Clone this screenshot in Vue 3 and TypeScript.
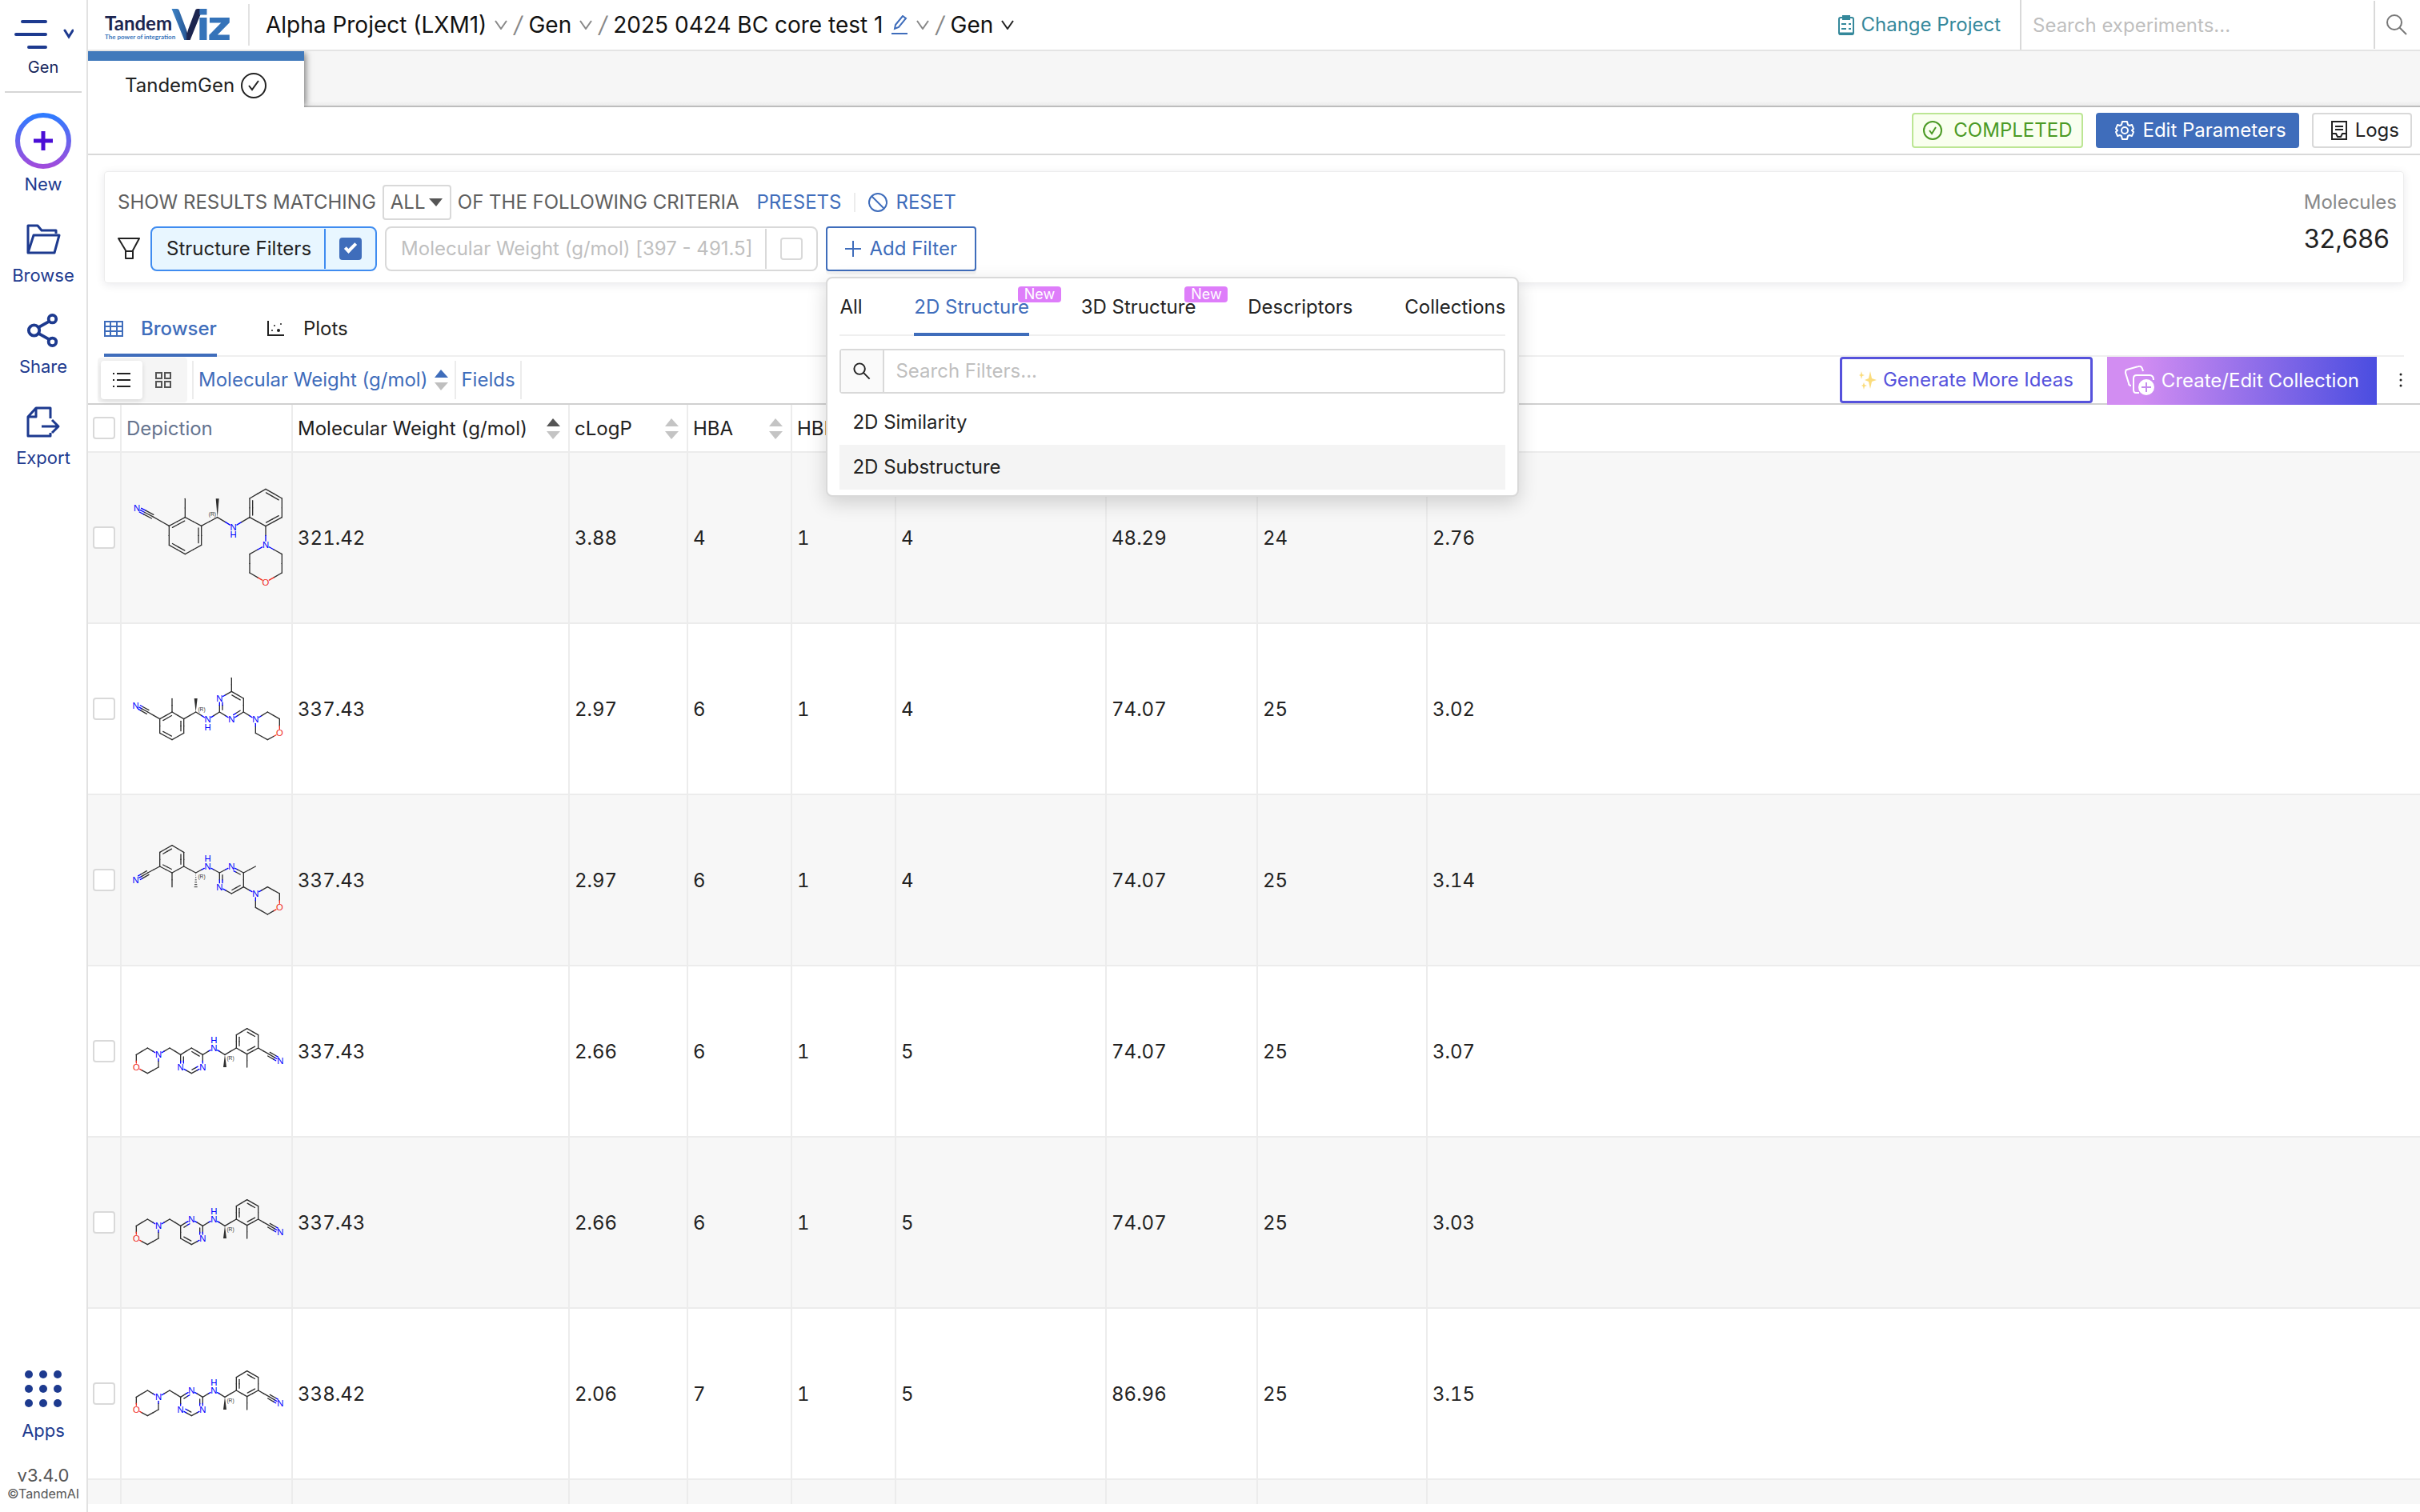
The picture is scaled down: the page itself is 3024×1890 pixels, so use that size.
<script setup lang="ts">
import { ref } from 'vue'

type Atom = [x: number, y: number, label?: string]
type Bond = [a: number, b: number, kind?: 1 | 2 | 3 | 'wedge' | 'hash']

interface Molecule {
  viewBox: string
  atoms: Atom[]
  bonds: Bond[]
  rings: number[][]
  hydrogen: [number, number]
  stereo: [number, number]
}

interface Segment {
  x1: number
  y1: number
  x2: number
  y2: number
  color: string
}

const colors: Record<string, string> = { N: '#0000ff', O: '#f02a1d' }
const carbon = '#2f2f2f'

const linkerBonds: Bond[] = [
  [0, 1, 3], [1, 2], [2, 3, 2], [3, 4], [4, 5, 2], [5, 6], [6, 7, 2], [7, 2], [3, 8], [4, 9],
]

const anilineMorpholine: Molecule = {
  viewBox: '156 18 636 636',
  atoms: [
    [213, 226, 'N'], [272, 257], [334, 292], [394, 260], [455, 292], [455, 364], [394, 398], [334, 364],
    [394, 190], [515, 260], [515, 190], [575, 296, 'N'],
    [636, 260], [636, 189], [696, 154], [757, 189], [757, 260], [696, 293],
    [696, 364, 'N'], [757, 398], [757, 468], [696, 503, 'O'], [636, 468], [636, 398],
  ],
  bonds: [
    ...linkerBonds, [9, 10, 'wedge'], [9, 11], [11, 12],
    [12, 13, 2], [13, 14], [14, 15, 2], [15, 16], [16, 17, 2], [17, 12],
    [17, 18], [18, 19], [19, 20], [20, 21], [21, 22], [22, 23], [23, 18],
  ],
  rings: [[2, 3, 4, 5, 6, 7], [12, 13, 14, 15, 16, 17]],
  hydrogen: [575, 323],
  stereo: [496, 248],
}

const methylPyrimidineA: Molecule = {
  viewBox: '156 -60 636 636',
  atoms: [
    [209, 245, 'N'], [254, 270], [299, 296], [345, 270], [389, 296], [389, 349], [345, 374], [299, 349],
    [345, 220], [434, 270], [434, 219], [479, 298, 'N'],
    [523, 270], [523, 219, 'N'], [568, 193], [613, 219], [613, 270], [568, 298, 'N'],
    [658, 298, 'N'], [703, 270], [748, 296], [748, 349, 'O'], [703, 374], [658, 349], [568, 142],
  ],
  bonds: [
    ...linkerBonds, [9, 10, 'wedge'], [9, 11], [11, 12],
    [12, 13, 2], [13, 14], [14, 15, 2], [15, 16], [16, 17, 2], [17, 12], [14, 24],
    [16, 18], [18, 19], [19, 20], [20, 21], [21, 22], [22, 23], [23, 18],
  ],
  rings: [[2, 3, 4, 5, 6, 7], [12, 13, 14, 15, 16, 17]],
  hydrogen: [479, 327],
  stereo: [456, 259],
}

const methylPyrimidineB: Molecule = {
  viewBox: '156 582 636 636',
  atoms: [
    [209, 899, 'N'], [254, 873], [299, 849], [345, 873], [389, 849], [389, 796], [345, 770], [299, 796],
    [345, 926], [434, 873], [434, 926], [479, 849, 'N'],
    [523, 873], [568, 849, 'N'], [613, 873], [613, 926], [568, 951], [523, 926, 'N'],
    [658, 951, 'N'], [703, 926], [748, 951], [748, 1003, 'O'], [703, 1029], [658, 1003], [658, 849],
  ],
  bonds: [
    ...linkerBonds, [9, 10, 'hash'], [9, 11], [11, 12],
    [12, 17, 2], [12, 13], [13, 14, 2], [14, 15], [15, 16, 2], [16, 17], [14, 24],
    [15, 18], [18, 19], [19, 20], [20, 21], [21, 22], [22, 23], [23, 18],
  ],
  rings: [[2, 3, 4, 5, 6, 7], [12, 13, 14, 15, 16, 17]],
  hydrogen: [479, 820],
  stereo: [456, 888],
}

function morpholinomethyl(nitrogens: number[], doubles: Bond[]): Molecule {
  const core: Atom[] = [[677, 199], [718, 174], [760, 199], [760, 246], [718, 269], [677, 246]]
  return {
    viewBox: '456 -132 636 636',
    atoms: [
      [1051, 222, 'N'], [1008, 197], [968, 174], [926, 197], [886, 174], [886, 125], [926, 101], [968, 125],
      [926, 246], [843, 199], [843, 246], [802, 174, 'N'],
      ...core.map(([x, y], i): Atom => (nitrogens.includes(i) ? [x, y, 'N'] : [x, y])),
      [636, 174], [594, 199, 'N'], [553, 174], [511, 199], [511, 246, 'O'], [553, 269], [594, 246],
    ],
    bonds: [
      ...linkerBonds, [9, 10, 'wedge'], [9, 11], [11, 14], ...doubles,
      [12, 18], [18, 19], [19, 20], [20, 21], [21, 22], [22, 23], [23, 24], [24, 19],
    ],
    rings: [[2, 3, 4, 5, 6, 7], [12, 13, 14, 15, 16, 17]],
    hydrogen: [802, 145],
    stereo: [864, 212],
  }
}

const pyrimidineC = morpholinomethyl([3, 5], [[12, 17, 2], [12, 13], [13, 14, 2], [14, 15], [15, 16, 2], [16, 17]])
const pyrimidineD = morpholinomethyl([1, 3], [[12, 13, 2], [13, 14], [14, 15, 2], [15, 16], [16, 17, 2], [17, 12]])
const triazine = morpholinomethyl([1, 3, 5], [[12, 13, 2], [13, 14], [14, 15, 2], [15, 16], [16, 17, 2], [17, 12]])

function segments(mol: Molecule): Segment[] {
  const out: Segment[] = []
  for (const [a, b, kind = 1] of mol.bonds) {
    if (kind === 'wedge' || kind === 'hash') continue
    const [ax, ay, al] = mol.atoms[a]
    const [bx, by, bl] = mol.atoms[b]
    const len = Math.hypot(bx - ax, by - ay)
    const ux = (bx - ax) / len
    const uy = (by - ay) / len
    let offsets = [0]
    let side = 1
    if (kind === 3) offsets = [-8, 0, 8]
    if (kind === 2) {
      offsets = [0, 11]
      const ring = mol.rings.find((r) => r.includes(a) && r.includes(b))
      if (ring) {
        const cx = ring.reduce((s, i) => s + mol.atoms[i][0], 0) / 6
        const cy = ring.reduce((s, i) => s + mol.atoms[i][1], 0) / 6
        side = (cx - ax) * -uy + (cy - ay) * ux > 0 ? 1 : -1
      }
    }
    for (const o of offsets) {
      const inset = o !== 0 && kind === 2 ? 8 : 0
      const sa = al ? 15 : inset
      const sb = bl ? 15 : o !== 0 && kind === 3 ? 0 : inset
      const dx = -uy * o * side
      const dy = ux * o * side
      const x1 = ax + ux * sa + dx
      const y1 = ay + uy * sa + dy
      const x2 = bx - ux * sb + dx
      const y2 = by - uy * sb + dy
      const mx = (ax + bx) / 2 + dx
      const my = (ay + by) / 2 + dy
      out.push({ x1, y1, x2: mx, y2: my, color: al ? colors[al] : carbon })
      out.push({ x1: mx, y1: my, x2, y2, color: bl ? colors[bl] : carbon })
    }
  }
  return out
}

function wedge(mol: Molecule): string {
  const bond = mol.bonds.find((b) => b[2] === 'wedge')
  if (!bond) return ''
  const [x, y] = mol.atoms[bond[0]]
  const [x2, y2] = mol.atoms[bond[1]]
  return `${x},${y} ${x2 - 6},${y2} ${x2 + 6},${y2}`
}

function hashes(mol: Molecule): Segment[] {
  const bond = mol.bonds.find((b) => b[2] === 'hash')
  if (!bond) return []
  const [x, y] = mol.atoms[bond[0]]
  const y2 = mol.atoms[bond[1]][1]
  return [1, 2, 3, 4, 5, 6].map((i) => {
    const yy = y + ((y2 - y) * i) / 6
    return { x1: x - i, y1: yy, x2: x + i, y2: yy, color: carbon }
  })
}

const columns = [
  { key: 'mw', title: 'Molecular Weight (g/mol)', active: true },
  { key: 'clogp', title: 'cLogP' },
  { key: 'hba', title: 'HBA' },
  { key: 'hbd', title: 'HBD' },
  { key: 'rot', title: '' },
  { key: 'tpsa', title: '' },
  { key: 'heavy', title: '' },
]

const rows = [
  { mol: anilineMorpholine, values: ['321.42', '3.88', '4', '1', '4', '48.29', '24', '2.76'] },
  { mol: methylPyrimidineA, values: ['337.43', '2.97', '6', '1', '4', '74.07', '25', '3.02'] },
  { mol: methylPyrimidineB, values: ['337.43', '2.97', '6', '1', '4', '74.07', '25', '3.14'] },
  { mol: pyrimidineC, values: ['337.43', '2.66', '6', '1', '5', '74.07', '25', '3.07'] },
  { mol: pyrimidineD, values: ['337.43', '2.66', '6', '1', '5', '74.07', '25', '3.03'] },
  { mol: triazine, values: ['338.42', '2.06', '7', '1', '5', '86.96', '25', '3.15'] },
]

const filterTabs = [
  { label: 'All' },
  { label: '2D Structure', isNew: true },
  { label: '3D Structure', isNew: true },
  { label: 'Descriptors' },
  { label: 'Collections' },
]
const activeFilterTab = ref('2D Structure')
const filterItems = ['2D Similarity', '2D Substructure']
const structureOn = ref(true)
const weightOn = ref(false)
</script>

<template>
  <div class="app">
    <aside class="side">
      <button class="side-btn menu" type="button">
        <svg width="76" height="40" viewBox="0 0 76 40" fill="none" stroke="#1d3a8f" stroke-linecap="round">
          <path d="M12 3h29M4 19h37M20 35h21" stroke-width="4" />
          <path d="M65 14l5 8 5-8" stroke-width="3" />
        </svg>
        <span class="menu-label">Gen</span>
      </button>
      <button class="side-btn new" type="button">
        <svg width="72" height="72" viewBox="0 0 72 72" fill="none">
          <defs>
            <linearGradient id="ring" x1="0" y1="0" x2="0" y2="1">
              <stop offset="0" stop-color="#2f7bff" />
              <stop offset="1" stop-color="#a04bdc" />
            </linearGradient>
          </defs>
          <circle cx="36" cy="36" r="32" stroke="url(#ring)" stroke-width="6" />
          <path d="M36 24v24M24 36h24" stroke="#4a0ed6" stroke-width="5" />
        </svg>
        <span>New</span>
      </button>
      <button class="side-btn" type="button">
        <svg width="44" height="42" viewBox="0 0 44 42" fill="none" stroke="#1d3a8f" stroke-width="3" stroke-linejoin="round">
          <path d="M3 38V4h12l5 6h18v4M3 38l7-22h32l-6 22z" />
        </svg>
        <span>Browse</span>
      </button>
      <button class="side-btn" type="button">
        <svg width="42" height="42" viewBox="0 0 44 44" fill="none" stroke="#1d3a8f" stroke-width="4">
          <circle cx="10" cy="22" r="7" />
          <circle cx="34" cy="7" r="5" />
          <circle cx="34" cy="37" r="5" />
          <path d="M16 18l14-8M16 26l14 8" />
        </svg>
        <span>Share</span>
      </button>
      <button class="side-btn" type="button">
        <svg width="44" height="42" viewBox="0 0 44 42" fill="none" stroke="#1d3a8f" stroke-width="3" stroke-linejoin="round">
          <path d="M31 17V4H13L3 15v24h28v-4M13 4v11H3M20 27h20M33 19l8 8-8 8" />
        </svg>
        <span>Export</span>
      </button>
      <div class="side-foot">
        <button class="side-btn" type="button">
          <svg width="48" height="48" viewBox="0 0 48 48" fill="#1d3a8f">
            <template v-for="r in 3" :key="r">
              <circle v-for="c in 3" :key="c" :cx="c * 18 - 12" :cy="r * 18 - 12" r="5" />
            </template>
          </svg>
          <span>Apps</span>
        </button>
        <span class="version">v3.4.0</span>
        <span class="copy">©TandemAI</span>
      </div>
    </aside>

    <main class="main">
      <header class="top">
        <svg class="logo" width="162" height="56" viewBox="0 0 162 56">
          <defs>
            <linearGradient id="vee" x1="0" y1="0" x2="1" y2="0">
              <stop offset="0" stop-color="#3f86c8" />
              <stop offset="0.45" stop-color="#285a9a" />
              <stop offset="0.5" stop-color="#1c2550" />
              <stop offset="1" stop-color="#1c2550" />
            </linearGradient>
          </defs>
          <text x="1" y="35" class="logo-name">Tandem</text>
          <text x="1" y="46" class="logo-tag">The power of integration</text>
          <text x="85" y="47" class="logo-big" fill="url(#vee)">V</text>
          <text x="115" y="47" class="logo-iz">i</text>
          <text x="129" y="47" class="logo-iz">z</text>
        </svg>
        <nav class="crumbs">
          <a href="#">Alpha Project (LXM1)</a>
          <svg class="chev" viewBox="0 0 16 12"><path d="M1 1l7 10 7-10" /></svg>
          <i>/</i>
          <a href="#">Gen</a>
          <svg class="chev" viewBox="0 0 16 12"><path d="M1 1l7 10 7-10" /></svg>
          <i>/</i>
          <a href="#">2025 0424 BC core test 1</a>
          <svg class="pen" viewBox="0 0 22 24"><path d="M1 23h20M5 17l1-5L15 1l4 3L10 15z" /></svg>
          <svg class="chev" viewBox="0 0 16 12"><path d="M1 1l7 10 7-10" /></svg>
          <i>/</i>
          <a href="#">Gen</a>
          <svg class="chev dark" viewBox="0 0 16 12"><path d="M1 1l7 10 7-10" /></svg>
        </nav>
        <a class="change" href="#">
          <svg width="20" height="28" viewBox="0 0 20 28" fill="none" stroke="#35889b" stroke-width="2">
            <rect x="1" y="5" width="18" height="21" rx="2" />
            <path d="M1 25h18" stroke-width="3" />
            <path d="M6 3h8v4H6z" fill="#35889b" />
            <path d="M4 13h6M4 19h6M13 13h3M13 19h3" />
          </svg>
          Change Project
        </a>
        <input class="top-search" type="text" placeholder="Search experiments..." aria-label="Search experiments" />
        <button class="top-search-btn" type="button" aria-label="Search">
          <svg width="26" height="26" viewBox="0 0 26 26" fill="none" stroke="#777" stroke-width="2">
            <circle cx="10" cy="10" r="9" />
            <path d="M16 16l9 9" />
          </svg>
        </button>
      </header>

      <div class="tabs">
        <button class="tab" type="button">
          TandemGen
          <svg width="32" height="32" viewBox="0 0 32 32" fill="none" stroke="#222" stroke-width="2">
            <circle cx="16" cy="16" r="15" />
            <path d="M10 16l4 5 8-11" />
          </svg>
        </button>
      </div>

      <div class="actions">
        <span class="tag">
          <svg width="24" height="24" viewBox="0 0 24 24" fill="none" stroke="#4b9a25" stroke-width="2">
            <circle cx="12" cy="12" r="11" />
            <path d="M8 12l3 4 5-8" />
          </svg>
          COMPLETED
        </span>
        <button class="btn primary" type="button">
          <svg width="24" height="24" viewBox="0 0 24 24" fill="none" stroke="#fff" stroke-width="2" stroke-linejoin="round">
            <path d="M9 1h6l1 4 2 1 3-1 2 5-2 2 2 2-2 5-3-1-2 1-1 4H9l-1-4-2-1-3 1-2-5 2-2-2-2 2-5 3 1 2-1z" />
            <circle cx="12" cy="12" r="4" />
          </svg>
          Edit Parameters
        </button>
        <button class="btn" type="button">
          <svg width="20" height="24" viewBox="0 0 20 24" fill="none" stroke="#222" stroke-width="2">
            <path d="M1 1h18v22H1zM5 7h10M5 11h10M1 16h5l2 4h4l2-4h5" />
          </svg>
          Logs
        </button>
      </div>

      <div class="content">
        <section class="card">
          <div class="criteria">
            <div class="line">
              <label for="match">SHOW RESULTS MATCHING</label>
              <span class="match">
                <select id="match"><option>ALL</option><option>ANY</option></select>
                <svg width="17" height="10" viewBox="0 0 17 10"><path d="M0 0h17L9 10z" fill="#555" /></svg>
              </span>
              <span>OF THE FOLLOWING CRITERIA</span>
              <button class="text-btn presets" type="button">PRESETS</button>
              <span class="rule"></span>
              <button class="text-btn" type="button">
                <svg width="24" height="24" viewBox="0 0 24 24" fill="none" stroke="#3f6dbb" stroke-width="2">
                  <circle cx="12" cy="12" r="11" />
                  <path d="M4 4l16 16" />
                </svg>
                RESET
              </button>
            </div>
            <div class="line filters">
              <svg class="funnel" width="28" height="28" viewBox="0 0 28 28" fill="none" stroke="#222" stroke-width="2" stroke-linejoin="round">
                <path d="M1 1h26l-8 15v10h-9V16zM10 17h9" />
              </svg>
              <div class="chip on">
                <label for="f-structure">Structure Filters</label>
                <span class="chip-box"><input id="f-structure" v-model="structureOn" class="check" type="checkbox" /></span>
              </div>
              <div class="chip">
                <label for="f-weight">Molecular Weight (g/mol) [397 - 491.5]</label>
                <span class="chip-box"><input id="f-weight" v-model="weightOn" class="check" type="checkbox" /></span>
              </div>
              <div class="adder">
                <button class="add" type="button">
                  <svg width="20" height="20" viewBox="0 0 20 20" stroke="#3f6dbb" stroke-width="2"><path d="M10 0v20M0 10h20" /></svg>
                  Add Filter
                </button>
                <div class="popup">
                  <div class="popup-tabs">
                    <button
                      v-for="t in filterTabs"
                      :key="t.label"
                      type="button"
                      :class="{ active: t.label === activeFilterTab }"
                      @click="activeFilterTab = t.label"
                    >
                      {{ t.label }}<sup v-if="t.isNew">New</sup>
                    </button>
                  </div>
                  <div class="popup-search">
                    <svg width="54" height="52" viewBox="0 0 54 52" fill="none" stroke="#222" stroke-width="2">
                      <circle cx="24" cy="23" r="7" />
                      <path d="M29 28l8 8" />
                    </svg>
                    <input type="text" placeholder="Search Filters..." aria-label="Search Filters" />
                  </div>
                  <ul>
                    <li v-for="(item, i) in filterItems" :key="item" :class="{ hover: i === 1 }">{{ item }}</li>
                  </ul>
                </div>
              </div>
            </div>
          </div>
          <dl class="count">
            <dt>Molecules</dt>
            <dd>32,686</dd>
          </dl>
        </section>

        <nav class="views">
          <button class="view active" type="button">
            <svg width="24" height="20" viewBox="0 0 24 20" fill="none" stroke="#3f6dbb" stroke-width="2">
              <path d="M1 1h22v18H1zM1 7h22M1 13h22M8 1v18M16 1v18" />
            </svg>
            Browser
          </button>
          <button class="view" type="button">
            <svg width="24" height="20" viewBox="0 0 24 20" fill="#222">
              <path d="M1 0h2v17h19v2H1z" />
              <circle cx="7" cy="12" r="1" /><circle cx="10" cy="6" r="1" />
              <circle cx="15" cy="12" r="2" /><circle cx="18" cy="4" r="1" />
            </svg>
            Plots
          </button>
        </nav>
      </div>

      <div class="toolbar">
        <div class="seg">
          <button class="on" type="button" aria-label="List">
            <svg width="24" height="20" viewBox="0 0 24 20" stroke="#222" stroke-width="2">
              <path d="M6 2h17M6 10h17M6 18h17M1 2h2M1 10h2M1 18h2" />
            </svg>
          </button>
          <button type="button" aria-label="Grid">
            <svg width="20" height="20" viewBox="0 0 20 20" fill="none" stroke="#555" stroke-width="2">
              <path d="M1 1h7v7H1zM12 1h7v7h-7zM1 12h7v7H1zM12 12h7v7h-7z" />
            </svg>
          </button>
        </div>
        <button class="tool sort" type="button">
          Molecular Weight (g/mol)
          <svg width="17" height="26" viewBox="0 0 17 26"><path d="M8 0l9 10H0z" fill="#3f6dbb" /><path d="M8 26l9-10H0z" fill="#bfbfbf" /></svg>
        </button>
        <button class="tool" type="button">Fields</button>
        <button class="ideas" type="button">
          <svg width="22" height="24" viewBox="0 0 22 24" fill="#fbdc7c">
            <path d="M14 1l2 9 6 2-6 2-2 9-2-9-5-2 5-2zM3 1l1 4 3 1-3 1-1 4-1-4-2-1 2-1zM6 15l1 3 3 1-3 1-1 4-1-4-2-1 2-1z" />
          </svg>
          Generate More Ideas
        </button>
        <button class="create" type="button">
          <svg width="38" height="38" viewBox="0 0 38 38" fill="none" stroke="#fff" stroke-width="2">
            <path d="M8 25c-2 0-3-1-3-3L1 9c0-2 0-4 2-4l14-4c3-1 5 1 6 6" />
            <path d="M18 34h-4c-2 0-3-1-3-4V16c0-3 1-4 4-4h16c3 0 5 1 5 6" />
            <circle cx="27" cy="27" r="9" fill="#fff" />
            <path d="M27 21v12M21 27h12" stroke="#c58bee" />
          </svg>
          Create/Edit Collection
        </button>
        <button class="more" type="button" aria-label="More">
          <svg width="4" height="18" viewBox="0 0 4 18" fill="#222"><circle cx="2" cy="2" r="1.5" /><circle cx="2" cy="9" r="1.5" /><circle cx="2" cy="16" r="1.5" /></svg>
        </button>
      </div>

      <table class="grid">
        <colgroup>
          <col class="c-check" /><col class="c-mol" /><col class="c-mw" /><col class="c-logp" />
          <col class="c-hb" /><col class="c-hb" /><col class="c-rot" /><col class="c-tpsa" /><col class="c-heavy" /><col />
        </colgroup>
        <thead>
          <tr>
            <th class="pick"><input class="check" type="checkbox" aria-label="Select all" /></th>
            <th class="muted">Depiction</th>
            <th v-for="c in columns" :key="c.key">
              <div class="head">
                <span>{{ c.title }}</span>
                <svg width="17" height="26" viewBox="0 0 17 26">
                  <path d="M8 0l9 10H0z" :fill="c.active ? '#555' : '#c4c4c4'" />
                  <path d="M8 26l9-10H0z" fill="#c4c4c4" />
                </svg>
              </div>
            </th>
            <th></th>
          </tr>
        </thead>
        <tbody>
          <tr v-for="(row, r) in rows" :key="r">
            <td class="pick"><input class="check" type="checkbox" :aria-label="`Select row ${r + 1}`" /></td>
            <td class="mol">
              <svg width="212" height="212" :viewBox="row.mol.viewBox">
                <line
                  v-for="(s, i) in segments(row.mol)"
                  :key="i"
                  :x1="s.x1" :y1="s.y1" :x2="s.x2" :y2="s.y2"
                  :stroke="s.color"
                  stroke-width="4"
                  stroke-linecap="round"
                />
                <polygon v-if="wedge(row.mol)" :points="wedge(row.mol)" fill="#2f2f2f" />
                <line
                  v-for="(s, i) in hashes(row.mol)"
                  :key="'h' + i"
                  :x1="s.x1" :y1="s.y1" :x2="s.x2" :y2="s.y2"
                  :stroke="s.color"
                  stroke-width="3"
                />
                <template v-for="(a, i) in row.mol.atoms" :key="'a' + i">
                  <text v-if="a[2]" :x="a[0]" :y="a[1] + 12" :fill="colors[a[2]]" class="atom">{{ a[2] }}</text>
                </template>
                <text :x="row.mol.hydrogen[0]" :y="row.mol.hydrogen[1] + 12" fill="#0000ff" class="atom">H</text>
                <text :x="row.mol.stereo[0]" :y="row.mol.stereo[1] + 7" fill="#2f2f2f" class="stereo">(R)</text>
              </svg>
            </td>
            <td v-for="(v, i) in row.values" :key="i">{{ v }}</td>
          </tr>
          <tr class="peek"><td v-for="n in 10" :key="n"></td></tr>
        </tbody>
      </table>
    </main>
  </div>
</template>

<style>
html,
body {
  margin: 0;
  background: #fff;
}
</style>

<style scoped>
.app {
  display: flex;
  height: 100vh;
  overflow: hidden;
  font-family: Inter, 'Liberation Sans', sans-serif;
  font-size: 24px;
  line-height: 32px;
  color: #222;
}
.app *,
.app *::before {
  box-sizing: border-box;
}
button,
input,
select {
  font: inherit;
  color: inherit;
  background: none;
  border: 0;
  padding: 0;
  margin: 0;
}
svg {
  display: block;
  flex: none;
}
a {
  color: inherit;
  text-decoration: none;
}
.side {
  width: 110px;
  flex: none;
  display: flex;
  flex-direction: column;
  align-items: center;
  border-right: 2px solid #e2e2e2;
}
.side-btn {
  display: flex;
  flex-direction: column;
  align-items: center;
  font-size: 22px;
  line-height: 32px;
  color: #1d3a8f;
  gap: 8px;
  margin-bottom: 32px;
}
.side-btn.menu {
  width: 96px;
  border-bottom: 2px solid #d6d6d6;
  padding: 24px 0 14px;
  margin-bottom: 24px;
  gap: 4px;
}
.menu-label {
  font-size: 20px;
  color: #14245c;
}
.side-btn.new {
  gap: 2px;
  margin-bottom: 32px;
}
.side-foot {
  margin-top: auto;
  padding-bottom: 16px;
  display: flex;
  flex-direction: column;
  align-items: center;
  color: #555;
}
.side-foot .side-btn {
  gap: 12px;
  margin-bottom: 24px;
}
.version {
  font-size: 22px;
  line-height: 32px;
}
.copy {
  font-size: 16px;
  line-height: 14px;
}
.main {
  flex: 1;
  min-width: 0;
  display: flex;
  flex-direction: column;
}
.top {
  display: flex;
  align-items: center;
  height: 64px;
  flex: none;
  border-bottom: 2px solid #e4e4e4;
}
.logo {
  margin: 0 18px 0 20px;
}
.logo-name {
  font: 700 24px Lato, sans-serif;
  fill: #1c2550;
}
.logo-tag {
  font: 700 8px Lato, sans-serif;
  fill: #3573b9;
}
.logo-big {
  font: 900 54px Lato, sans-serif;
}
.logo-iz {
  font: 700 52px 'DejaVu Sans', sans-serif;
  fill: #3573b9;
}
.crumbs {
  display: flex;
  align-items: center;
  gap: 8px;
  height: 52px;
  border-left: 2px solid #e2e2e2;
  padding-left: 20px;
  font-size: 28px;
  color: #111;
  white-space: nowrap;
}
.crumbs i {
  color: #888;
}
.chev {
  width: 16px;
  height: 12px;
  margin-left: 2px;
  fill: none;
  stroke: #888;
  stroke-width: 2;
}
.chev.dark {
  stroke: #222;
}
.pen {
  width: 22px;
  height: 24px;
  margin-left: 2px;
  fill: none;
  stroke: #3f6dbb;
  stroke-width: 2;
}
.change {
  margin-left: auto;
  display: flex;
  align-items: center;
  gap: 8px;
  color: #35889b;
  padding-right: 24px;
}
.top-search {
  width: 442px;
  height: 62px;
  border-left: 2px solid #d9d9d9;
  padding-left: 14px;
}
input::placeholder {
  color: #bfbfbf;
  opacity: 1;
}
.top-search-btn {
  width: 58px;
  height: 60px;
  border-left: 2px solid #d9d9d9;
  padding-left: 14px;
}
.tabs {
  height: 70px;
  flex: none;
  background: linear-gradient(#f6f6f6 62px, #ececec 68px, #bdbdbd 68px);
}
.tab {
  display: flex;
  align-items: center;
  gap: 8px;
  width: 270px;
  height: 70px;
  padding: 4px 0 0 46px;
  background: #fff;
  border-top: 12px solid #4079bb;
  box-shadow: 4px 0 8px -2px rgba(0, 0, 0, 0.5);
  clip-path: inset(0 -16px 0 0);
}
.actions {
  display: flex;
  justify-content: flex-end;
  align-items: center;
  gap: 16px;
  height: 60px;
  flex: none;
  padding: 0 10px 0 0;
  border-bottom: 2px solid #d9d9d9;
}
.tag,
.btn {
  display: flex;
  align-items: center;
  height: 44px;
  border: 2px solid #d9d9d9;
  border-radius: 4px;
  padding: 0 14px 0 22px;
  gap: 10px;
  background: #fff;
}
.tag {
  padding: 0 12px;
  gap: 14px;
  color: #4b9a25;
  background: #f9ffef;
  border-color: #bce694;
}
.btn.primary {
  background: #3f6dbb;
  border-color: #3f6dbb;
  color: #fff;
}
.content {
  padding: 20px 20px 0;
  flex: none;
}
.card {
  display: flex;
  justify-content: space-between;
  height: 140px;
  padding: 16px 8px 0 16px;
  border-radius: 4px;
  border: 1px solid #ededed;
  box-shadow: 0 2px 12px rgba(0, 0, 40, 0.09);
}
.line {
  display: flex;
  align-items: center;
  gap: 8px;
  height: 44px;
  color: #5e5e5e;
  white-space: nowrap;
}
.match {
  display: flex;
  align-items: center;
  width: 86px;
  height: 44px;
  border: 2px solid #d9d9d9;
  border-radius: 4px;
  padding-left: 8px;
}
.match select {
  appearance: none;
  width: 48px;
}
.match svg {
  pointer-events: none;
}
.text-btn {
  display: flex;
  align-items: center;
  gap: 10px;
  color: #3f6dbb;
}
.presets {
  margin-left: 14px;
}
.rule {
  width: 2px;
  height: 24px;
  background: #ececec;
  margin: 0 8px;
}
.filters {
  gap: 10px;
  height: 56px;
  margin-top: 8px;
}
.funnel {
  margin-right: 3px;
}
.chip {
  display: flex;
  align-items: center;
  height: 56px;
  border: 2px solid #d9d9d9;
  border-radius: 8px;
  color: #bfbfbf;
}
.chip label {
  padding: 0 16px 0 18px;
}
.chip-box {
  display: flex;
  align-items: center;
  justify-content: center;
  width: 64px;
  height: 50px;
  border-left: 2px solid #d9d9d9;
}
.chip.on {
  background: #e8f6ff;
  border-color: #3f8cf0;
  color: #222;
}
.chip.on .chip-box {
  border-color: #3f8cf0;
}
.check {
  appearance: none;
  display: block;
  width: 28px;
  height: 28px;
  border: 2px solid #d9d9d9;
  border-radius: 4px;
  background: #fff;
}
.check:checked {
  background: #3f6dbb;
  border-color: #3f6dbb;
}
.check:checked::before {
  content: '';
  display: block;
  width: 8px;
  height: 15px;
  margin: 2px 0 0 8px;
  border: solid #fff;
  border-width: 0 4px 4px 0;
  transform: rotate(45deg);
}
.adder {
  position: relative;
}
.add {
  display: flex;
  align-items: center;
  gap: 10px;
  height: 56px;
  padding: 0 22px;
  border: 2px solid #3f6dbb;
  border-radius: 4px;
  color: #3f6dbb;
  background: #fff;
  box-shadow: 0 4px 0 #f4f4f4;
}
.popup {
  position: absolute;
  z-index: 2;
  top: 63px;
  left: 0;
  width: 866px;
  height: 275px;
  padding: 8px 15px;
  background: #fff;
  border: 2px solid #d9d9d9;
  border-radius: 8px;
  box-shadow: 0 8px 24px rgba(0, 0, 0, 0.16);
  color: #222;
}
.popup-tabs {
  display: flex;
  justify-content: space-between;
  height: 64px;
  border-bottom: 2px solid #efefef;
}
.popup-tabs button {
  position: relative;
  height: 64px;
  padding-bottom: 8px;
}
.popup-tabs .active {
  color: #3f6dbb;
  border-bottom: 4px solid #3f6dbb;
  padding-bottom: 4px;
}
.popup-tabs sup {
  position: absolute;
  top: 2px;
  right: -40px;
  width: 54px;
  height: 20px;
  font-size: 18px;
  line-height: 20px;
  border-radius: 4px;
  background: #de7dfa;
  color: #fff;
}
.popup-search {
  display: flex;
  height: 56px;
  margin-top: 16px;
  border: 2px solid #d9d9d9;
  border-radius: 4px;
}
.popup-search svg {
  background: #fafafa;
  border-right: 2px solid #d9d9d9;
}
.popup-search input {
  flex: 1;
  padding-left: 14px;
}
.popup ul {
  list-style: none;
  margin: 8px 0 0;
  padding: 0;
}
.popup li {
  padding: 12px 16px;
}
.popup li.hover {
  background: #f4f4f4;
}
.count {
  margin: 0;
}
.count dt {
  color: #888;
  line-height: 32px;
  margin-top: 6px;
}
.count dd {
  margin: 10px 0 0;
  font-size: 32px;
  line-height: 40px;
}
.views {
  display: flex;
  gap: 62px;
  height: 92px;
  padding-top: 20px;
  border-bottom: 2px solid #efefef;
}
.view {
  display: flex;
  align-items: center;
  gap: 22px;
  height: 72px;
  padding-top: 6px;
  border-bottom: 4px solid transparent;
}
.view.active {
  color: #3f6dbb;
  border-color: #3f6dbb;
  font-weight: 500;
}
.toolbar {
  display: flex;
  align-items: center;
  height: 60px;
  flex: none;
  padding: 0 22px 0 12px;
  border-bottom: 2px solid #d0d0d0;
}
.seg {
  display: flex;
  padding: 4px;
  height: 56px;
  background: #f5f5f5;
  border-radius: 4px;
  margin-right: 6px;
}
.seg button {
  display: flex;
  align-items: center;
  justify-content: center;
  width: 52px;
  height: 48px;
  border-radius: 4px;
}
.seg .on {
  background: #fff;
  box-shadow: 0 2px 6px rgba(0, 0, 0, 0.12);
}
.tool {
  display: flex;
  align-items: center;
  height: 48px;
  padding: 0 6px;
  border-right: 2px solid #ececec;
  color: #3f6dbb;
}
.tool.sort {
  gap: 9px;
  padding-right: 8px;
  border-left: 2px solid #ececec;
}
.ideas {
  display: flex;
  align-items: center;
  gap: 8px;
  margin-left: auto;
  height: 58px;
  padding: 0 21px;
  border: 3px solid #5652dc;
  border-radius: 4px;
  color: #5652dc;
}
.create {
  display: flex;
  align-items: center;
  gap: 8px;
  height: 60px;
  margin: 0 28px -2px 18px;
  padding: 0 22px;
  color: #fff;
  background: linear-gradient(90deg, #d28df2 12%, #4a4de0);
}
.grid {
  table-layout: fixed;
  width: 100%;
  border-collapse: separate;
  border-spacing: 0;
  font-variant-numeric: tabular-nums;
}
.c-check { width: 42px; }
.c-mol { width: 214px; }
.c-mw { width: 346px; }
.c-logp { width: 148px; }
.c-hb { width: 130px; }
.c-rot { width: 263px; }
.c-tpsa { width: 189px; }
.c-heavy { width: 212px; }
.grid th,
.grid td {
  padding: 2px 6px 0;
  border-right: 2px solid #ececec;
  border-bottom: 2px solid #ececec;
  text-align: left;
  font-weight: 400;
  vertical-align: middle;
}
.grid .pick {
  padding-top: 0;
}
.grid th:last-child,
.grid td:last-child {
  border-right: 0;
}
.grid th {
  height: 60px;
}
.grid td {
  height: 214px;
}
.grid tbody tr:nth-child(odd) {
  background: #f7f7f7;
}
.grid .mol {
  padding: 0;
}
.grid .peek td {
  height: 30px;
  border-bottom: 0;
}
.muted {
  color: #66748f;
}
.head {
  display: flex;
  justify-content: space-between;
  align-items: center;
  padding-right: 4px;
}
.atom {
  font: 34px 'Liberation Sans', sans-serif;
  text-anchor: middle;
}
.stereo {
  font: 20px 'Liberation Sans', sans-serif;
  text-anchor: middle;
}
</style>
